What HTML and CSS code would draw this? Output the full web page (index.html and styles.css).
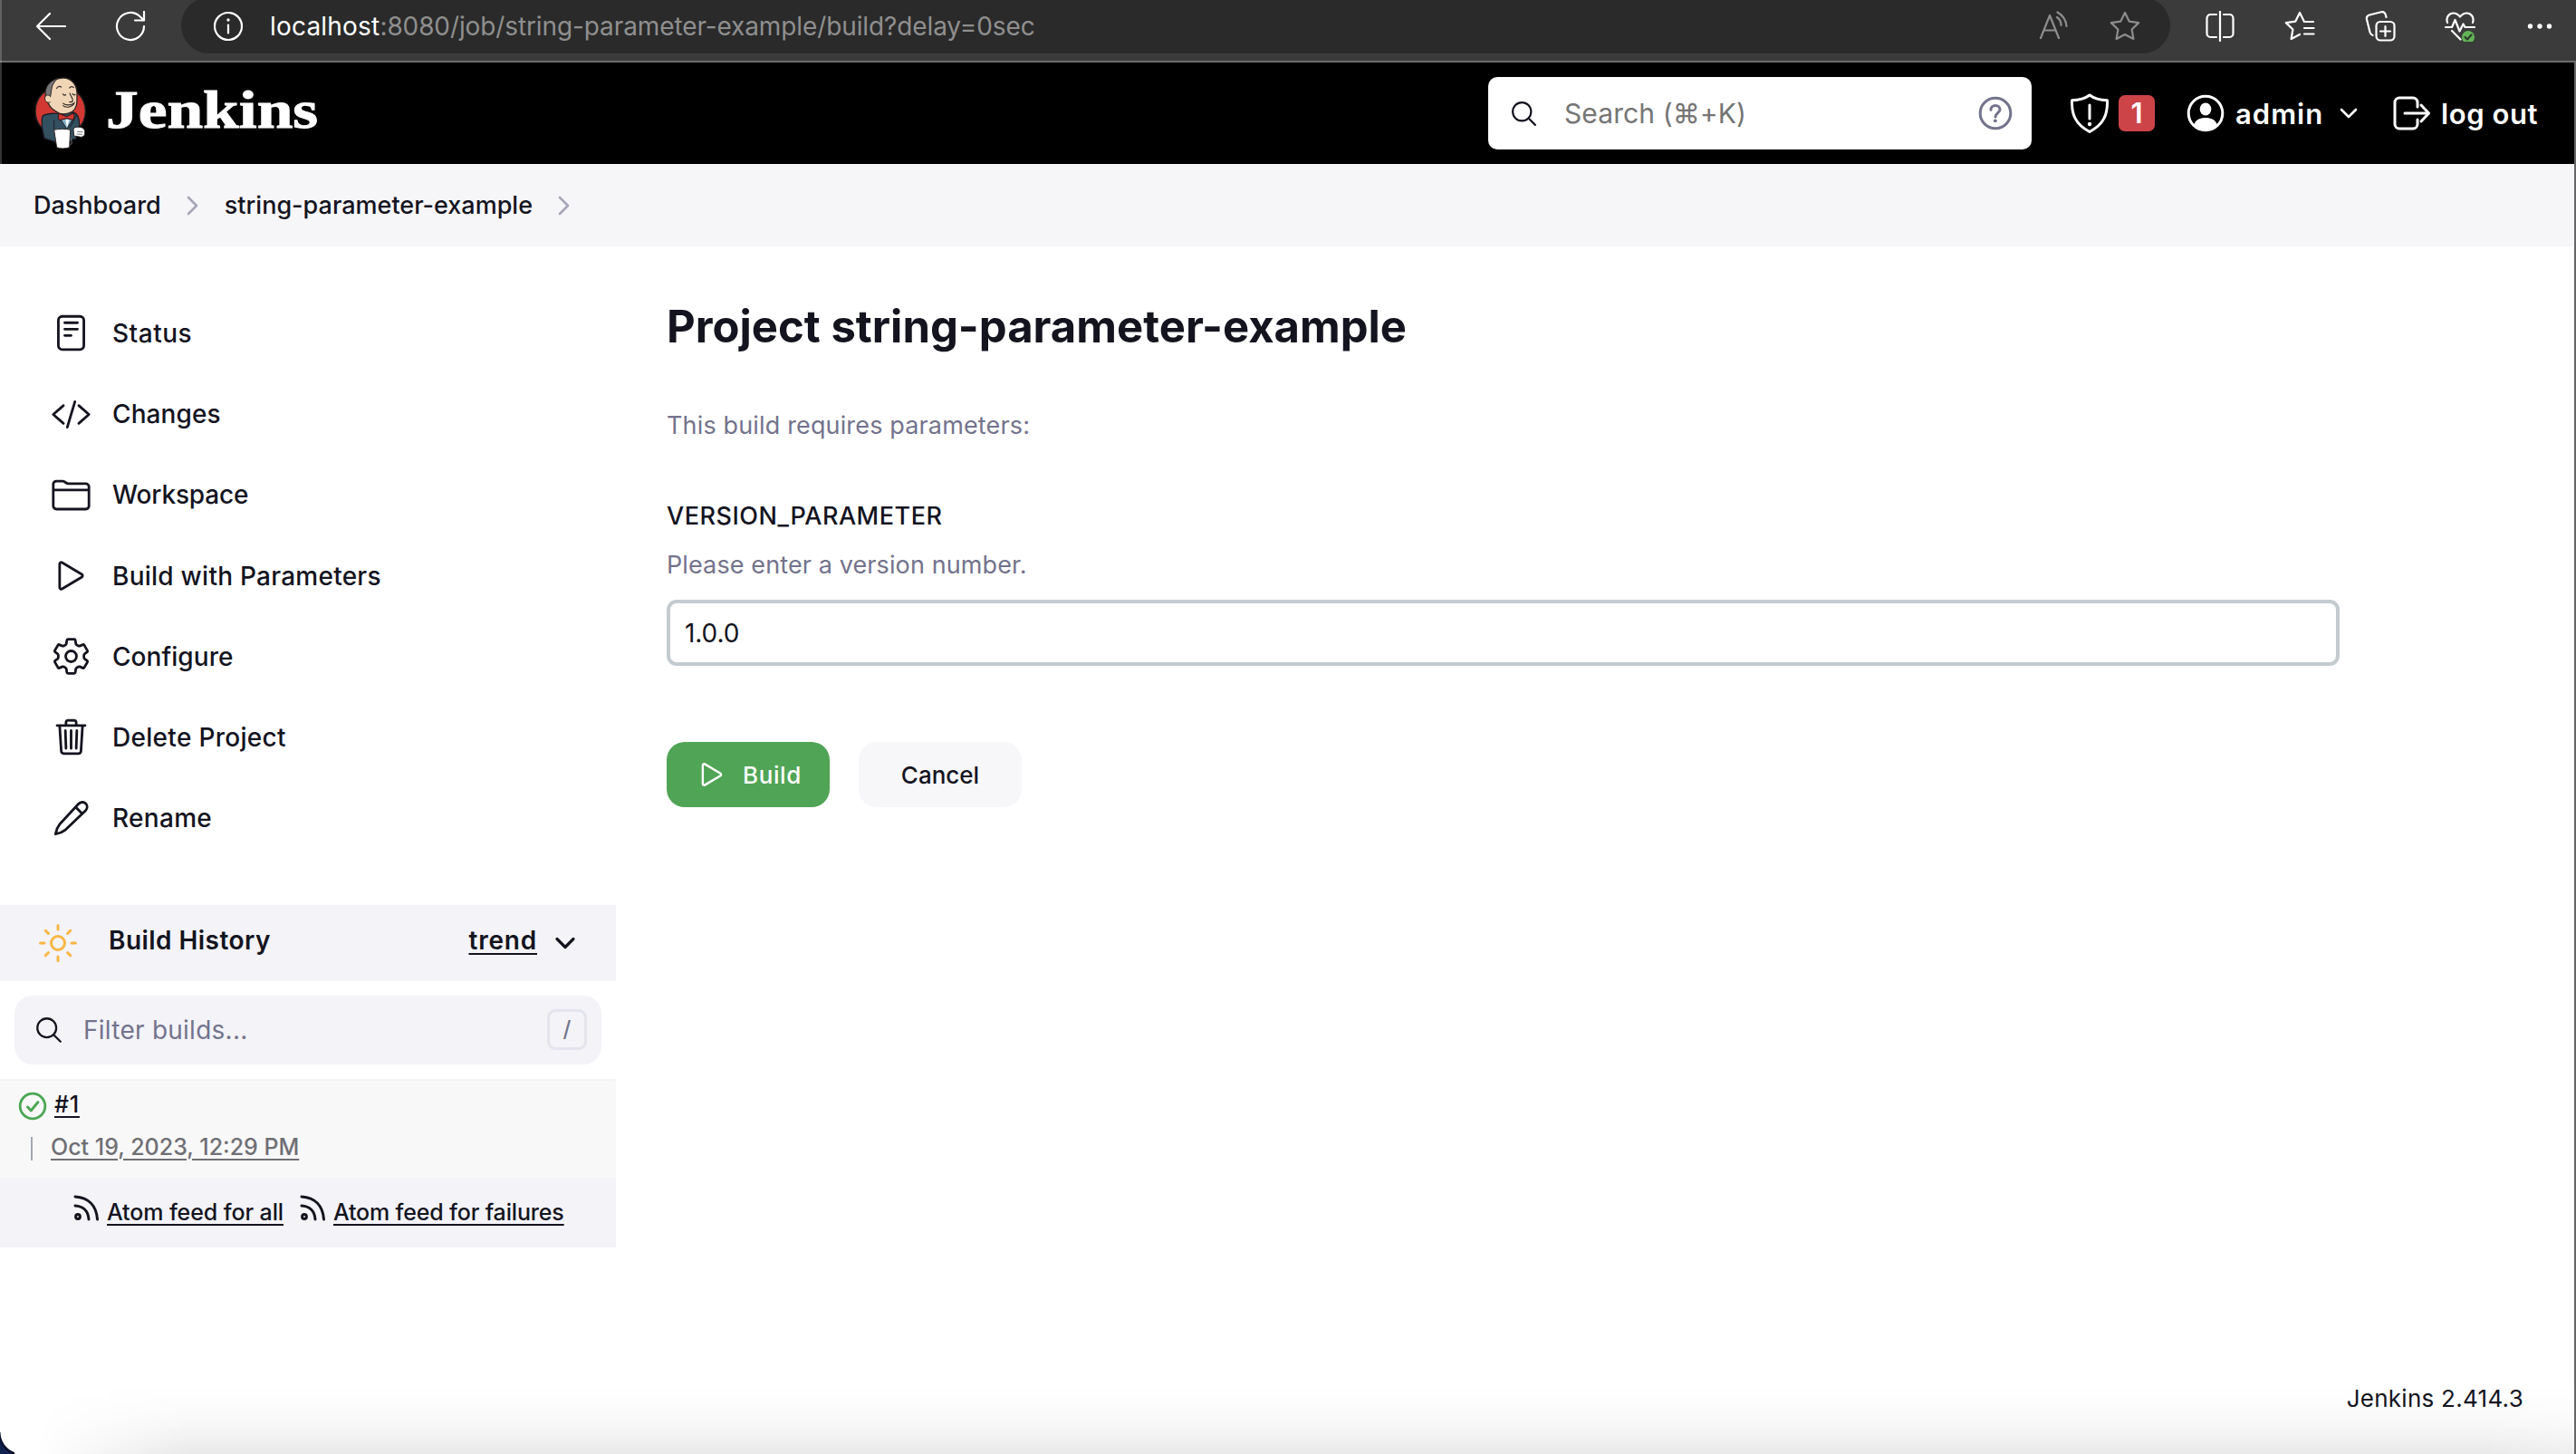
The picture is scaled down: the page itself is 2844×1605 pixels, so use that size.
FILE: index.html
```html
<!DOCTYPE html>
<html lang="en">
<head>
<meta charset="utf-8">
<title>Project string-parameter-example - Jenkins</title>
<link rel="stylesheet" href="styles.css">
</head>
<body>
<div class="browser-bar">
  <svg class="bi back" width="34" height="34" viewBox="0 0 34 34"><path d="M33 17H2M16 3 2 17l14 14"/></svg>
  <svg class="bi reload" width="34" height="34" viewBox="0 0 34 34"><path d="M32 17a15 15 0 1 1-5-11.200L32 10.500M32 1v9.500h-10"/></svg>
  <div class="address">
    <svg class="bi" width="34" height="34" viewBox="0 0 34 34"><circle cx="17" cy="17" r="15"/><path d="M17 15.500v9"/><circle class="dot" cx="17" cy="10" r="1.700"/></svg>
    <div class="url"><span class="host">localhost</span>:8080/job/string-parameter-example/build?delay=0sec</div>
    <svg class="bi dim read" width="32" height="34" viewBox="0 0 32 34"><path d="M2 30 12 5l10 25M5.500 21.500h13M20 7c3 2 4.500 5 4.500 9M20.500 1.500c6 3.500 9.500 8.500 10 15.500"/></svg>
    <svg class="bi dim" width="34" height="34" viewBox="0 0 34 34"><path d="m17 2 4.700 9.600 10.500 1.500-7.600 7.400 1.800 10.500L17 26.100 7.600 31l1.800-10.500-7.600-7.400 10.500-1.500Z"/></svg>
  </div>
  <div class="browser-actions">
    <svg class="bi" width="34" height="34" viewBox="0 0 34 34"><path d="M13 4H6.500A4 4 0 0 0 2.500 8v17a4 4 0 0 0 4 4H13M21 4h6.500a4 4 0 0 1 4 4v17a4 4 0 0 1-4 4H21M17 0v33"/></svg>
    <svg class="bi" width="34" height="34" viewBox="0 0 34 34"><path d="M32 12H22l-5-10-4.700 9.600-10.500 1.500 7.600 7.400L7.600 31l9.400-5M22 19h10.500M22 25.500h10.500"/></svg>
    <svg class="bi" width="34" height="34" viewBox="0 0 34 34"><rect x="12.500" y="12" width="20" height="20.500" rx="4.500"/><path d="M22.500 17v11M17 22.500h11M8.500 27c-1.500-.5-2.500-1.800-3-3.500L2 9.500c-.6-2.500.6-4.300 3-5L18 1.200c2.400-.6 4 .6 4.700 2.800l.8 3"/></svg>
    <svg class="bi" width="34" height="34" viewBox="0 0 34 34"><path d="M3 13C1 7 5 2.500 9.500 2.500c3.500 0 5.500 1.500 7.500 4 2-2.500 4-4 7.500-4C29 2.500 33 7 31 13M1 18h7l3.500-8 5 12.500 4-8 2 3.500H33M8 22l9.500 9.500"/><circle class="ok" cx="26" cy="29" r="7"/><path class="tick" d="m22.500 29 2.500 2.500 4.500-5"/></svg>
    <svg class="bi" width="34" height="34" viewBox="0 0 34 34"><g class="dot"><circle cx="6.500" cy="17" r="2.700"/><circle cx="17" cy="17" r="2.700"/><circle cx="27.500" cy="17" r="2.700"/></g></svg>
  </div>
</div>

<header class="page-header">
  <a class="brand">
    <svg width="60" height="82" viewBox="22 24 180 246">
      <ellipse cx="111" cy="140" rx="83" ry="82" fill="#d33833" stroke="#222" stroke-width="4"/>
      <path d="M52 156c14-8 30-9 44-8l58-4c14 4 20 22 20 42l-12 46-66 10-38-12c-6-24-12-56-6-74Z" fill="#335061" stroke="#1d1f26" stroke-width="4"/>
      <path d="M62 90C60 62 80 30 120 30c32 0 48 28 46 58 0 22 2 40-16 54-20 10-40 10-52 0-16-8-26-18-36-52Z" fill="#f0d6b7" stroke="#302825" stroke-width="4"/>
      <path d="M62 88c-4-28 14-48 40-56-12 12-18 20-20 34l-4 26c-4 10-12 2-16-4Z" fill="#77777a" stroke="#302825" stroke-width="3"/>
      <path d="M78 92c-8-10-20-4-18 8 1 10 10 14 18 10" fill="#f0d6b7" stroke="#302825" stroke-width="3"/>
      <path d="M98 66c4-8 10-10 17-5M140 64c6-7 12-6 16-1M119 82c2 6 8 8 10 2M151 82c2 5 8 6 10 2M142 80c2 10 12 18 10 26-3 5-8 4-12 3M119 114c12 8 26 7 38-1-4 14-28 18-38 8" fill="none" stroke="#302825" stroke-width="3.500"/>
      <path d="m112 168 20 30 22-34-20-2Z" fill="#81b0c4" stroke="#1d1f26" stroke-width="3"/>
      <path d="m128 168 5 28 7-28Z" fill="#fff"/>
      <path d="m131 158-24-10c-5 8-4 16 1 22l24-6 20 5c6-7 6-14 3-22Z" fill="#d33833" stroke="#351010" stroke-width="3"/>
      <path d="M90 170v34M164 154l-22 42" stroke="#1d1f26" stroke-width="3" fill="none"/>
      <path d="M90 202c16-4 38-4 54 0l-3 58c-12 5-32 5-42 0Z" fill="#fff" stroke="#302825" stroke-width="3"/>
      <path d="M154 198c8-8 28-7 36 2 4 14 2 24-10 26l-24-4Z" fill="#fff" stroke="#302825" stroke-width="3"/>
      <path d="m166 208 20 1M165 216l19 1M146 230l3 16-7 8" stroke="#777" stroke-width="3" fill="none"/>
    </svg>
    <span class="wordmark">Jenkins</span>
  </a>
  <div class="search">
    <svg class="ion thin" width="33" height="33" viewBox="0 0 512 512"><path d="M221.090 64a157.090 157.090 0 1 0 157.090 157.090A157.100 157.100 0 0 0 221.090 64zM338.290 338.290 448 448"/></svg>
    <span class="search-text">Search (⌘+K)</span>
    <svg class="help" width="38" height="38" viewBox="0 0 38 38"><circle cx="19" cy="19" r="16.800"/><path d="M14 15.200c0-3 2.300-4.700 5-4.700s5 1.700 5 4.500c0 3.500-5 3.900-5 8"/><circle class="q-dot" cx="18.800" cy="27.300" r="1.900"/></svg>
  </div>
  <div class="alerts">
    <svg width="44" height="46" viewBox="0 0 44 46"><path d="M22 3C17 6.800 10 8.500 2.500 8.700 2 24 6 35 22 43.500 38 35 42 24 41.500 8.700 34 8.500 27 6.800 22 3ZM22 14v15"/><circle class="dot" cx="22" cy="35" r="2.200"/></svg>
    <span class="badge">1</span>
  </div>
  <div class="user">
    <svg width="42" height="42" viewBox="0 0 42 42"><circle cx="21" cy="21" r="18.800"/><ellipse class="dot" cx="21" cy="16.500" rx="6.300" ry="7"/><path class="dot" d="M8 34c2-6 7-8 13-8s11 2 13 8c-7 7-19 7-26 0Z"/></svg>
    <span class="admin">admin</span>
    <svg class="chev" width="22" height="14" viewBox="0 0 22 14"><path d="m3 3 8 8 8-8"/></svg>
  </div>
  <div class="logout">
    <svg width="42" height="38" viewBox="0 0 42 38"><path d="M27 12V7a5 5 0 0 0-5-5H7a5 5 0 0 0-5 5v24a5 5 0 0 0 5 5h15a5 5 0 0 0 5-5v-5M13 19h26M31 10l8.500 9-8.500 9"/></svg>
    <span class="logout-text">log out</span>
  </div>
</header>

<nav class="breadcrumbs">
  <span class="crumb">Dashboard</span>
  <svg width="16" height="24" viewBox="0 0 16 24"><path d="m3 3 9 9-9 9"/></svg>
  <span class="crumb">string-parameter-example</span>
  <svg width="16" height="24" viewBox="0 0 16 24"><path d="m3 3 9 9-9 9"/></svg>
</nav>

<div class="page-body">
  <aside class="side-panel">
    <div class="tasks">
      <a class="task"><svg class="ion" width="45" height="45" viewBox="0 0 512 512"><rect x="96" y="48" width="320" height="416" rx="48"/><path d="M176 128h160M176 208h160M176 288h80"/></svg><span class="t1">Status</span></a>
      <a class="task"><svg class="ion" width="45" height="45" viewBox="0 0 512 512"><path d="M160 368 32 256l128-112M352 368l128-112-128-112M304 96l-96 320"/></svg><span class="t2">Changes</span></a>
      <a class="task"><svg class="ion" width="45" height="45" viewBox="0 0 512 512"><path d="M440 432H72a40 40 0 0 1-40-40V120a40 40 0 0 1 40-40h75.890a40 40 0 0 1 22.190 6.720l27.840 18.560a40 40 0 0 0 22.190 6.720H440a40 40 0 0 1 40 40v240a40 40 0 0 1-40 40zM32 192h448"/></svg><span class="t3">Workspace</span></a>
      <a class="task"><svg class="ion" width="45" height="45" viewBox="0 0 512 512"><path d="M112 111v290c0 17.440 17 28.520 31 20.160l247.900-148.370c12.120-7.250 12.120-26.330 0-33.580L143 90.840c-14-8.360-31 2.720-31 20.160z"/></svg><span class="t4">Build with Parameters</span></a>
      <a class="task"><svg class="ion" width="45" height="45" viewBox="0 0 512 512"><circle cx="256" cy="256" r="68"/><path d="M217 42h78q12 0 14 11l7 46q2 9 10 13l22 13q7 4 15 1l42-17q10-4 16 6l39 68q6 10-2 17l-34 27q-8 7-7 16v26q-1 9 7 16l34 27q8 7 2 17l-39 68q-6 10-16 6l-42-17q-8-3-15 1l-22 13q-8 4-10 13l-7 46q-2 11-14 11h-78q-12 0-14-11l-7-46q-2-9-10-13l-22-13q-7-4-15-1l-42 17q-10 4-16-6l-39-68q-6-10 2-17l34-27q8-7 7-16v-26q1-9-7-16l-34-27q-8-7-2-17l39-68q6-10 16-6l42 17q8 3 15-1l22-13q8-4 10-13l7-46q2-11 14-11Z"/></svg><span class="t5">Configure</span></a>
      <a class="task"><svg class="ion" width="45" height="45" viewBox="0 0 512 512"><path d="m112 112 20 320c.95 18.490 14.400 32 32 32h184c17.670 0 30.870-13.510 32-32l20-320M80 112h352M192 112V72a23.930 23.930 0 0 1 24-24h80a23.930 23.930 0 0 1 24 24v40M256 176v224M184 176l8 224M328 176l-8 224"/></svg><span class="t6">Delete Project</span></a>
      <a class="task"><svg class="ion" width="45" height="45" viewBox="0 0 512 512"><path d="M350 72c24-26 66-28 90-4 24 24 22 62-2 88L188 396c-38 30-78 46-128 56 10-50 26-90 56-128ZM312 112l84 84"/></svg><span class="t7">Rename</span></a>
    </div>
    <section class="history">
      <div class="history-head">
        <svg class="ion sun" width="48" height="48" viewBox="0 0 512 512"><circle cx="256" cy="256" r="80"/><path d="M256 48v48M256 416v48M403.080 108.920l-33.940 33.940M142.860 369.140l-33.940 33.940M464 256h-48M96 256H48M403.080 403.080l-33.940-33.940M142.860 142.860l-33.940-33.940"/></svg>
        <span class="history-title">Build History</span>
        <a class="trend">trend</a>
        <svg class="head-chev" width="26" height="16" viewBox="0 0 26 16"><path d="m4 3.500 9 9 9-9"/></svg>
      </div>
      <div class="filter">
        <svg class="ion thin" width="34" height="34" viewBox="0 0 512 512"><path d="M221.090 64a157.090 157.090 0 1 0 157.090 157.090A157.100 157.100 0 0 0 221.090 64zM338.290 338.290 448 448"/></svg>
        <span class="filter-text">Filter builds...</span>
        <kbd>/</kbd>
      </div>
      <div class="build">
        <div class="build-line">
          <svg width="32" height="32" viewBox="0 0 32 32"><circle cx="16" cy="16" r="13.800"/><path d="m10.500 17 3.700 4 7.800-9.500"/></svg>
          <a class="num">#1</a>
        </div>
        <div class="build-date"><a>Oct 19, 2023, 12:29 PM</a></div>
      </div>
      <div class="feeds">
        <svg width="28" height="30" viewBox="0 0 28 30"><path d="M2 3c15 1 23.500 10 24.500 25M2 13c9 .5 14.500 6 15 15"/><circle cx="5" cy="25" r="2.400"/></svg>
        <a class="feed-all">Atom feed for all</a>
        <svg width="28" height="30" viewBox="0 0 28 30"><path d="M2 3c15 1 23.500 10 24.500 25M2 13c9 .5 14.500 6 15 15"/><circle cx="5" cy="25" r="2.400"/></svg>
        <a class="feed-fail">Atom feed for failures</a>
      </div>
    </section>
  </aside>

  <main class="content">
    <h1>Project string-parameter-example</h1>
    <p class="intro">This build requires parameters:</p>
    <div class="label">VERSION_PARAMETER</div>
    <div class="hint">Please enter a version number.</div>
    <div class="field">1.0.0</div>
    <div class="buttons">
      <div class="btn primary"><svg class="ion" width="36" height="36" viewBox="0 0 512 512"><path d="M112 111v290c0 17.440 17 28.520 31 20.160l247.900-148.370c12.120-7.250 12.120-26.330 0-33.580L143 90.840c-14-8.360-31 2.720-31 20.160z"/></svg><span>Build</span></div>
      <div class="btn cancel">Cancel</div>
    </div>
    <footer>Jenkins 2.414.3</footer>
  </main>
</div>
<div class="dock-shadow"></div>
<div class="edge-left"></div>
<div class="corner"></div>
</body>
</html>
```
FILE: styles.css
```css
* { box-sizing: border-box; }
body {
  margin: 0;
  width: 2844px;
  height: 1605px;
  overflow: hidden;
  position: relative;
  display: flex;
  flex-direction: column;
  background: #fff;
  color: #14141f;
  font-family: Inter, "Liberation Sans", sans-serif;
  white-space: nowrap;
}
svg { flex: none; display: block; fill: none; }

.browser-bar {
  height: 69px;
  flex: none;
  display: flex;
  align-items: flex-start;
  padding-left: 39px;
  background: #3b3b3b;
  border-bottom: 2px solid #6b6b6b;
}
.bi { stroke: #fff; stroke-width: 2.2; stroke-linecap: round; stroke-linejoin: round; }
.back, .reload { margin-top: 12px; }
.reload { margin-left: 54px; }
.bi .dot, .dot { fill: #fff; stroke: none; }
.bi.dim { stroke: #8d8d8d; }
.bi .ok { fill: #62b356; stroke: none; }
.bi .tick { stroke: #2c3a2a; }
.address {
  width: 2196px;
  height: 62px;
  margin: -3px 0 0 39px;
  padding: 2px 33px 0 35px;
  display: flex;
  align-items: center;
  border-radius: 31px;
  background: #2a2a2a;
}
.url {
  flex: 1;
  margin-left: 29px;
  font-size: 28px;
  letter-spacing: -0.11px;
  color: #8f8f8f;
}
.host { color: #fff; letter-spacing: 0.2px; }
.read { margin-right: 46px; }
.browser-actions { display: flex; gap: 54.3px; margin: 12px 0 0 38px; }

.page-header {
  height: 112px;
  flex: none;
  display: flex;
  align-items: center;
  padding-left: 37px;
  background: #000;
  color: #fff;
  border-right: 2px solid #666;
}
.brand { display: flex; align-items: center; width: 1606px; }
.wordmark {
  margin-left: 20px;
  font: 700 60px/80px "Liberation Serif", serif;
  transform: translateY(-4px) scaleX(1.19);
  transform-origin: 0 50%;
  -webkit-text-stroke: 1px #fff;
}
.search {
  width: 600px;
  height: 80px;
  display: flex;
  align-items: center;
  padding: 0 21px 0 23px;
  border-radius: 10px;
  background: #fff;
}
.search-text { flex: 1; margin-left: 28px; font-size: 30px; letter-spacing: 0.1px; color: #757575; }
.ion { stroke: currentColor; stroke-width: 32; stroke-linecap: round; stroke-linejoin: round; }
.ion.thin { stroke: #14141f; stroke-width: 34; }
.help { stroke: #73738c; stroke-width: 3; stroke-linecap: round; }
.help .q-dot { fill: #73738c; stroke: none; }
.alerts, .user, .logout { display: flex; align-items: center; font-size: 31px; font-weight: 600; }
.alerts svg, .user svg, .logout svg { stroke: #fff; stroke-width: 3; stroke-linecap: round; stroke-linejoin: round; }
.alerts { margin-left: 42px; gap: 10px; }
.badge {
  width: 40px;
  height: 40px;
  line-height: 40px;
  text-align: center;
  border-radius: 7px;
  background: #cc4448;
  font-size: 31px;
}
.user { margin-left: 35px; }
.admin { margin-left: 12px; width: 95px; letter-spacing: 1px; }
.user .chev { margin-left: 19px; stroke-width: 2.6; }
.logout { margin-left: 38px; }
.logout-text { margin-left: 11px; letter-spacing: 0.58px; }

.breadcrumbs {
  height: 91px;
  flex: none;
  display: flex;
  align-items: center;
  padding-left: 37px;
  background: #f6f6f9;
  border-right: 2px solid #666;
  font-size: 27px;
  font-weight: 500;
}
.breadcrumbs svg { margin: 0 27px; stroke: #a6a6b8; stroke-width: 2.6; stroke-linecap: round; stroke-linejoin: round; }

.page-body { flex: 1; min-height: 0; display: flex; border-right: 2px solid #666; }
.side-panel { width: 680px; flex: none; }
.tasks { padding: 51.4px 0 51.2px 56px; }
.task { height: 89.2px; display: flex; align-items: center; gap: 23px; font-size: 28px; font-weight: 500; }
.t1 { letter-spacing: 0.5px; }
.t2 { letter-spacing: 0.1px; }
.t3 { letter-spacing: -0.15px; }
.t4 { letter-spacing: 0.25px; }
.t5 { letter-spacing: 0.06px; }
.t6 { letter-spacing: 0.3px; }
.t7 { letter-spacing: 0.3px; }

.history-head {
  height: 84px;
  display: flex;
  align-items: center;
  padding: 0 43px 0 40px;
  background: #f3f3f8;
  font-size: 28px;
  font-weight: 600;
}
.sun { stroke: #f8b744; }
.history-title { flex: 1; margin: 0 0 5px 32px; letter-spacing: 0.45px; }
.trend { margin: 0 18px 5px 0; letter-spacing: 0.8px; }
.trend, .num, .build-date a, .feeds a { text-decoration: underline; text-decoration-thickness: 2px; text-underline-offset: 4px; }
.head-chev { stroke: #14141f; stroke-width: 3.2; stroke-linecap: round; stroke-linejoin: round; }
.filter {
  height: 76px;
  margin: 16px;
  padding: 0 16px 0 21px;
  display: flex;
  align-items: center;
  border-radius: 20px;
  background: #f3f3f8;
}
.filter-text { flex: 1; margin-left: 21px; font-size: 28px; letter-spacing: 0.25px; color: #73738c; }
kbd {
  width: 44px;
  height: 45px;
  border: 3px solid #e4e4ee;
  border-radius: 9px;
  font: 500 24px/38px Inter, sans-serif;
  text-align: center;
  color: #73738c;
}
.build {
  height: 109px;
  border-top: 2px solid #f3f3f8;
  padding: 9px 0 0 20px;
  background: #f8f8f8;
  font-size: 25px;
  font-weight: 500;
}
.build-line { display: flex; align-items: center; height: 38px; }
.build-line svg { stroke: #4ba654; stroke-width: 2.8; stroke-linecap: round; stroke-linejoin: round; }
.num { margin: 0 0 4px 8px; letter-spacing: 0.8px; }
.build-date {
  height: 26px;
  line-height: 22px;
  margin: 15px 0 0 14px;
  padding-left: 20px;
  border-left: 2px solid #a3a8b0;
  color: #6f6f74;
}
.feeds {
  height: 77px;
  display: flex;
  align-items: center;
  padding-left: 81px;
  background: #f3f3f8;
  font-size: 25px;
  font-weight: 500;
}
.feeds svg { margin-bottom: 11px; stroke: #14141f; stroke-width: 3; stroke-linecap: round; }
.feed-all { width: 194px; margin: 0 19px 0 9px; letter-spacing: -0.1px; }
.feed-fail { margin-left: 9px; letter-spacing: -0.16px; }

.content { flex: 1; display: flex; flex-direction: column; padding: 59px 0 0 56px; }
h1 { margin: 0; font-size: 49px; line-height: 60px; font-weight: 700; }
.intro, .hint, .label { line-height: 40px; font-size: 27px; }
.intro { margin: 59px 0 0; letter-spacing: 0.15px; color: #73738c; }
.label { margin: 60px 0 0; font-weight: 500; letter-spacing: 0.51px; }
.hint { margin-top: 14px; letter-spacing: 0.11px; color: #73738c; }
.field {
  width: 1847px;
  height: 73px;
  margin-top: 18px;
  padding-left: 16px;
  border: 4px solid #c3cbcf;
  border-radius: 11px;
  font-size: 28px;
  line-height: 66px;
  letter-spacing: -0.1px;
}
.buttons { display: flex; gap: 32px; margin-top: 84px; }
.btn {
  width: 180px;
  height: 72px;
  display: flex;
  align-items: center;
  border-radius: 20px;
  font-size: 26px;
  font-weight: 500;
}
.primary { padding-left: 32px; background: #50a455; color: #fff; letter-spacing: 0.6px; }
.primary span { margin-left: 16px; }
.primary .ion { stroke-width: 34; }
.cancel { justify-content: center; background: #f7f7fa; }
footer { margin: auto 56px 41px 0; text-align: right; font-size: 26px; line-height: 40px; letter-spacing: 0.27px; }

/* soft shadow cast upwards by the desktop dock */
.dock-shadow {
  position: absolute;
  left: 0;
  bottom: 0;
  width: 2842px;
  height: 76px;
  background: linear-gradient(to top, rgba(0, 0, 0, 0.088), rgba(0, 0, 0, 0.05) 25%, rgba(0, 0, 0, 0.022) 50%, rgba(0, 0, 0, 0.007) 75%, transparent);
  -webkit-mask-image: linear-gradient(to right, transparent 40px, rgba(0, 0, 0, 0.5) 120px, #000 210px, #000 2740px, rgba(0, 0, 0, 0.75) 2842px);
  mask-image: linear-gradient(to right, transparent 40px, rgba(0, 0, 0, 0.5) 120px, #000 210px, #000 2740px, rgba(0, 0, 0, 0.75) 2842px);
}
.edge-left { position: absolute; left: 0; top: 0; width: 2px; height: 181px; background: rgba(255, 255, 255, 0.2); }
.corner {
  position: absolute;
  left: 0;
  bottom: 0;
  width: 16px;
  height: 24px;
  background: radial-gradient(circle at 24px 0, transparent 23px, #050b20 24px, #12224f 27px);
}
```
